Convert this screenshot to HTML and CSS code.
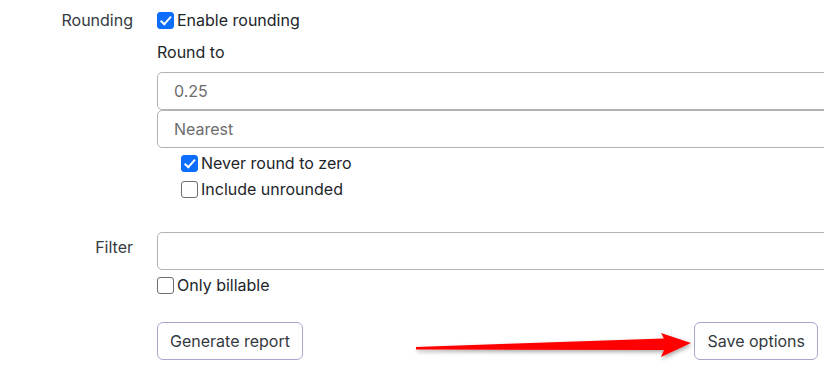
FILE: index.html
```html
<!DOCTYPE html>
<html>
<head>
<meta charset="utf-8">
<link rel="stylesheet" href="styles.css">
</head>
<body>
<form class="form">
  <div class="row">
    <div class="label">Rounding</div>
    <div class="control">
      <label class="check"><span class="box checked"></span>Enable rounding</label>
      <div class="sublabel">Round to</div>
      <div class="input">0.25</div>
      <div class="input">Nearest</div>
      <div class="nested">
        <label class="check"><span class="box checked"></span>Never round to zero</label>
        <label class="check"><span class="box"></span>Include unrounded</label>
      </div>
    </div>
  </div>
  <div class="row filter-row">
    <div class="label label-input">Filter</div>
    <div class="control">
      <div class="input"></div>
      <label class="check billable"><span class="box"></span>Only billable</label>
    </div>
  </div>
  <div class="row actions">
    <div class="label"></div>
    <div class="buttons">
      <button type="button" class="btn">Generate report</button>
      <button type="button" class="btn">Save options</button>
    </div>
  </div>
</form>
<svg class="arrow" width="824" height="384" viewBox="0 0 824 384">
  <defs>
    <filter id="sh" x="-10%" y="-50%" width="120%" height="200%">
      <feGaussianBlur in="SourceAlpha" stdDeviation="2"/>
      <feOffset dx="1" dy="2"/>
      <feComponentTransfer><feFuncA type="linear" slope="0.35"/></feComponentTransfer>
      <feMerge><feMergeNode/><feMergeNode in="SourceGraphic"/></feMerge>
    </filter>
  </defs>
  <polygon filter="url(#sh)" fill="#ff0000" points="416,347 664,338.5 661,333 691,343 661,357 664,350 416,349.5"/>
</svg>
</body>
</html>
```
FILE: styles.css
```css
html, body {
  margin: 0;
  padding: 0;
  overflow: hidden;
  background: #ffffff;
}
body {
  width: 824px;
  height: 384px;
  position: relative;
  font-family: Inter, "Noto Sans", sans-serif;
  font-size: 16px;
  line-height: 24px;
  color: #212529;
}
.form {
  padding-top: 8px;
  display: flex;
  flex-direction: column;
}
.row {
  display: flex;
  gap: 24px;
}
.label {
  width: 133px;
  flex: none;
  text-align: right;
  color: #343a40;
}
.label-input {
  padding-top: 3px;
}
.control {
  width: 720px;
  flex: none;
  display: flex;
  flex-direction: column;
}
.check {
  display: flex;
  align-items: center;
  height: 24px;
  gap: 3px;
  color: #212529;
}
.box {
  width: 15px;
  height: 15px;
  border: 1px solid #707070;
  border-radius: 3px;
  background: #fff;
  flex: none;
  position: relative;
}
.box.checked {
  background: #0d6efd;
  border-color: #0d6efd;
}
.box.checked::after {
  content: "";
  position: absolute;
  left: 5px;
  top: 1.5px;
  width: 4px;
  height: 8.5px;
  border: solid #fff;
  border-width: 0 2.5px 2.5px 0;
  transform: rotate(42deg);
}
.sublabel {
  margin-top: 8px;
}
.sublabel + .input {
  margin-top: 8px;
}
.input {
  height: 38px;
  box-sizing: border-box;
  border: 1px solid #b3b3b3;
  border-radius: 5px;
  padding: 0 16px;
  display: flex;
  align-items: center;
  color: #6c6c6c;
}
.nested {
  padding-left: 24px;
  margin-top: 3px;
  display: flex;
  flex-direction: column;
  gap: 2px;
}
.filter-row {
  margin-top: 31px;
}
.billable {
  margin-top: 3px;
}
.actions {
  margin-top: 25px;
}
.buttons {
  width: 661px;
  display: flex;
  justify-content: space-between;
}
.btn {
  font-family: Inter, "Noto Sans", sans-serif;
  font-size: 16px;
  color: #343a40;
  background: #fff;
  border: 1px solid #a7a7cf;
  border-radius: 6px;
  height: 38px;
  padding: 0 12px;
}
.arrow {
  position: absolute;
  left: 0;
  top: 0;
  pointer-events: none;
}
```
